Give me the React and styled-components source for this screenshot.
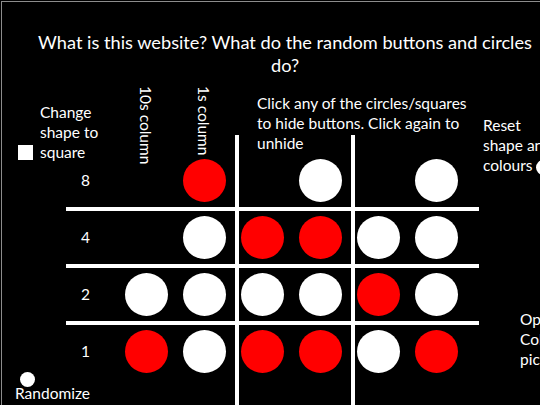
import React from "react"
import styled, { createGlobalStyle } from "styled-components"

const GlobalStyle = createGlobalStyle`
  html, body {
    margin: 0;
    padding: 0;
    background: #000;
    overflow: hidden;
  }
  body {
    font-family: Lato, "Liberation Sans", sans-serif;
    color: #fff;
  }
`

// which lights are on in each row (null = not shown for that column)
const rows = [
  { value: 8, cells: [null, "red", null, "white", null, "white"] },
  { value: 4, cells: [null, "white", "red", "red", "white", "white"] },
  { value: 2, cells: ["white", "white", "white", "white", "red", "white"] },
  { value: 1, cells: ["red", "white", "red", "red", "white", "red"] },
]

export default function App() {
  return (
    <Page>
      <GlobalStyle />
      <Title>
        What is this website? What do the random buttons and circles do?
      </Title>
      <Clock>
        <LabelCell $row={1} $pad={14}>
          <ShapeToggle>
            <SquareButton aria-label="Change shape to square" />
            <ControlText>Change shape to square</ControlText>
          </ShapeToggle>
        </LabelCell>
        <GroupCell $row={1} $col={2}>
          <HeadingSlot>
            <ColumnHeading>10s column</ColumnHeading>
          </HeadingSlot>
          <HeadingSlot>
            <ColumnHeading>1s column</ColumnHeading>
          </HeadingSlot>
        </GroupCell>
        <Hint>
          Click any of the circles/squares to hide buttons. Click again to
          unhide
        </Hint>
        <Reset>
          Reset shape and colours <RoundButton aria-label="Reset" />
        </Reset>

        {rows.map((row, i) => {
          const r = 2 + i * 2
          return (
            <React.Fragment key={row.value}>
              {i > 0 && <HLine $row={r - 1} />}
              <LabelCell $row={r} $center>
                <RowNumber>{row.value}</RowNumber>
              </LabelCell>
              {[0, 1, 2].map(g => (
                <GroupCell key={g} $row={r} $col={2 + g * 2} $center>
                  {row.cells.slice(g * 2, g * 2 + 2).map((c, j) => (
                    <Light key={j} $color={c || "white"} $off={!c} />
                  ))}
                </GroupCell>
              ))}
            </React.Fragment>
          )
        })}

        <VLine $col={3} />
        <VLine $col={5} />

        <ColourPicker>Open Colour picker</ColourPicker>

        <LabelCell $row={9}>
          <Randomize>
            <RoundButton aria-label="Randomize" />
            <ControlText>Randomize</ControlText>
          </Randomize>
        </LabelCell>
      </Clock>
    </Page>
  )
}

// styled components

const Page = styled.div`
  width: 600px;
  min-height: 420px;
  margin: 1px 0 0 1px;
  border-top: 1px solid #8c8c8c;
  border-left: 1px solid #8c8c8c;
  padding-top: 29px;
  box-sizing: border-box;
`

const Title = styled.h1`
  width: 510px;
  margin: 0 0 0 28px;
  font-size: 18.2px;
  font-weight: 400;
  line-height: 23px;
  text-align: center;
`

const Clock = styled.div`
  display: grid;
  grid-template-columns: 105px 112px 4px 112px 4px 124px 100px;
  grid-template-rows: 65.5px 53px 4px 53px 4px 53px 4px 53px 40px;
  margin: 11px 0 0 16px;
  font-size: 15.5px;
  line-height: 20px;
`

const LabelCell = styled.div`
  grid-column: 1;
  grid-row: ${p => p.$row};
  display: flex;
  align-items: ${p => (p.$center ? "center" : "flex-start")};
  padding-top: ${p => p.$pad || 0}px;
  min-width: 0;
`

const GroupCell = styled.div`
  grid-column: ${p => p.$col};
  grid-row: ${p => p.$row};
  display: flex;
  align-items: ${p => (p.$center ? "center" : "flex-start")};
  gap: 15px;
  padding-left: 1.5px;
`

const ShapeToggle = styled.div`
  display: flex;
  align-items: flex-end;
  gap: 7px;
  width: 100px;
`

const ControlText = styled.span`
  width: 70px;
`

const SquareButton = styled.button`
  width: 15px;
  height: 15px;
  flex: none;
  border: none;
  padding: 0;
  margin-bottom: 2px;
  background: #fff;
`

const RoundButton = styled.button`
  display: inline-block;
  width: 15px;
  height: 15px;
  border: none;
  padding: 0;
  border-radius: 50%;
  background: #fff;
  vertical-align: middle;
`

const HeadingSlot = styled.div`
  width: 43px;
  display: flex;
  justify-content: center;
`

const ColumnHeading = styled.span`
  writing-mode: vertical-rl;
  white-space: nowrap;
  margin-top: -2px;
`

const Hint = styled.div`
  grid-column: 4 / 8;
  grid-row: 1 / 3;
  padding: 5px 0 0 18px;
  max-width: 214px;
`

const Reset = styled.div`
  grid-column: 7;
  grid-row: 1 / 3;
  padding: 27px 0 0 4px;
  width: 76px;
`

const ColourPicker = styled.div`
  grid-column: 7;
  grid-row: 6 / 9;
  padding: 41px 0 0 41px;
  width: 52px;
`

const RowNumber = styled.span`
  padding-left: 63px;
`

const Light = styled.button`
  width: 43px;
  height: 43px;
  flex: none;
  border: none;
  padding: 0;
  border-radius: 50%;
  background: ${p => (p.$color === "red" ? "#ff0000" : "#ffffff")};
  visibility: ${p => (p.$off ? "hidden" : "visible")};
`

const HLine = styled.div`
  grid-column: 1 / 7;
  grid-row: ${p => p.$row};
  margin-left: 48px;
  background: #fff;
`

const VLine = styled.div`
  grid-column: ${p => p.$col};
  grid-row: 1 / -1;
  margin-top: 47px;
  background: #fff;
`

const Randomize = styled.div`
  display: flex;
  flex-direction: column;
  align-items: flex-start;
  margin: -5.5px 0 0 -3px;
  gap: 0;

  & > button {
    margin: 0 0 -4px 5px;
  }
`
